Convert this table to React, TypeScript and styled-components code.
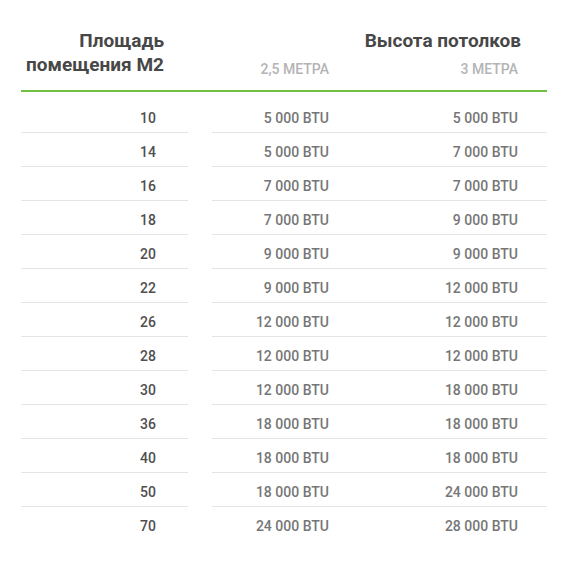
import React from 'react';
import styled, {createGlobalStyle} from 'styled-components';

const GlobalStyle = createGlobalStyle`
  body {
    margin: 0;
    background: #fff;
    font-family: Roboto, "Liberation Sans", sans-serif;
  }
`;

const Table = styled.div`
  width: 526px;
  margin: 0 21px;
`;

const Head = styled.div`
  display: flex;
  align-items: flex-end;
  padding: 29px 0 13px;
  border-bottom: 2px solid #72bf44;
`;

const HeadArea = styled.div`
  width: 167px;
  padding-right: 24px;
  box-sizing: border-box;
  text-align: right;
  font-size: 19px;
  line-height: 24px;
  font-weight: 700;
  color: #474747;
`;

const HeadGroup = styled.div`
  flex: 1;
  margin-left: 24px;
`;

const GroupTitle = styled.div`
  text-align: right;
  padding-right: 26px;
  font-size: 19px;
  line-height: 24px;
  font-weight: 700;
  color: #474747;
`;

const SubRow = styled.div`
  display: flex;
  margin-top: 8px;
`;

const SubCell = styled.div<{$wide?: boolean}>`
  ${p => (p.$wide ? 'flex: 1;' : 'width: 148px;')}
  padding-right: ${p => (p.$wide ? 29 : 31)}px;
  box-sizing: border-box;
  text-align: right;
  font-size: 14px;
  line-height: 16px;
  font-weight: 500;
  color: #b4b4b4;
  text-transform: uppercase;
`;

const Body = styled.div`
  padding-top: 7px;
`;

const Row = styled.div`
  display: flex;
`;

const AreaCell = styled.div<{$last?: boolean}>`
  width: 167px;
  padding: 9px 32px 4px 0;
  box-sizing: border-box;
  text-align: right;
  font-size: 14px;
  line-height: 20px;
  font-weight: 500;
  color: #4f4f4f;
  border-bottom: 1px solid ${p => (p.$last ? 'transparent' : '#e4e4e4')};
`;

const ValueGroup = styled.div<{$last?: boolean}>`
  flex: 1;
  display: flex;
  margin-left: 24px;
  border-bottom: 1px solid ${p => (p.$last ? 'transparent' : '#e4e4e4')};
`;

const ValueCell = styled.div<{$wide?: boolean}>`
  ${p => (p.$wide ? 'flex: 1;' : 'width: 148px;')}
  padding: 9px ${p => (p.$wide ? 29 : 31)}px 4px 0;
  box-sizing: border-box;
  text-align: right;
  font-size: 14px;
  line-height: 20px;
  font-weight: 500;
  color: #767676;
`;

const rows: [number, string, string][] = [
  [10, '5 000', '5 000'],
  [14, '5 000', '7 000'],
  [16, '7 000', '7 000'],
  [18, '7 000', '9 000'],
  [20, '9 000', '9 000'],
  [22, '9 000', '12 000'],
  [26, '12 000', '12 000'],
  [28, '12 000', '12 000'],
  [30, '12 000', '18 000'],
  [36, '18 000', '18 000'],
  [40, '18 000', '18 000'],
  [50, '18 000', '24 000'],
  [70, '24 000', '28 000'],
];

const App = () => {
  return (
    <>
      <GlobalStyle />
      <Table>
        <Head>
          <HeadArea>
            Площадь
            <br />
            помещения М2
          </HeadArea>
          <HeadGroup>
            <GroupTitle>Высота потолков</GroupTitle>
            <SubRow>
              <SubCell>2,5 метра</SubCell>
              <SubCell $wide>3 метра</SubCell>
            </SubRow>
          </HeadGroup>
        </Head>
        <Body>
          {rows.map(([area, low, high], i) => {
            const last = i === rows.length - 1;
            return (
              <Row key={area}>
                <AreaCell $last={last}>{area}</AreaCell>
                <ValueGroup $last={last}>
                  <ValueCell>{low} BTU</ValueCell>
                  <ValueCell $wide>{high} BTU</ValueCell>
                </ValueGroup>
              </Row>
            );
          })}
        </Body>
      </Table>
    </>
  );
};

export default App;
